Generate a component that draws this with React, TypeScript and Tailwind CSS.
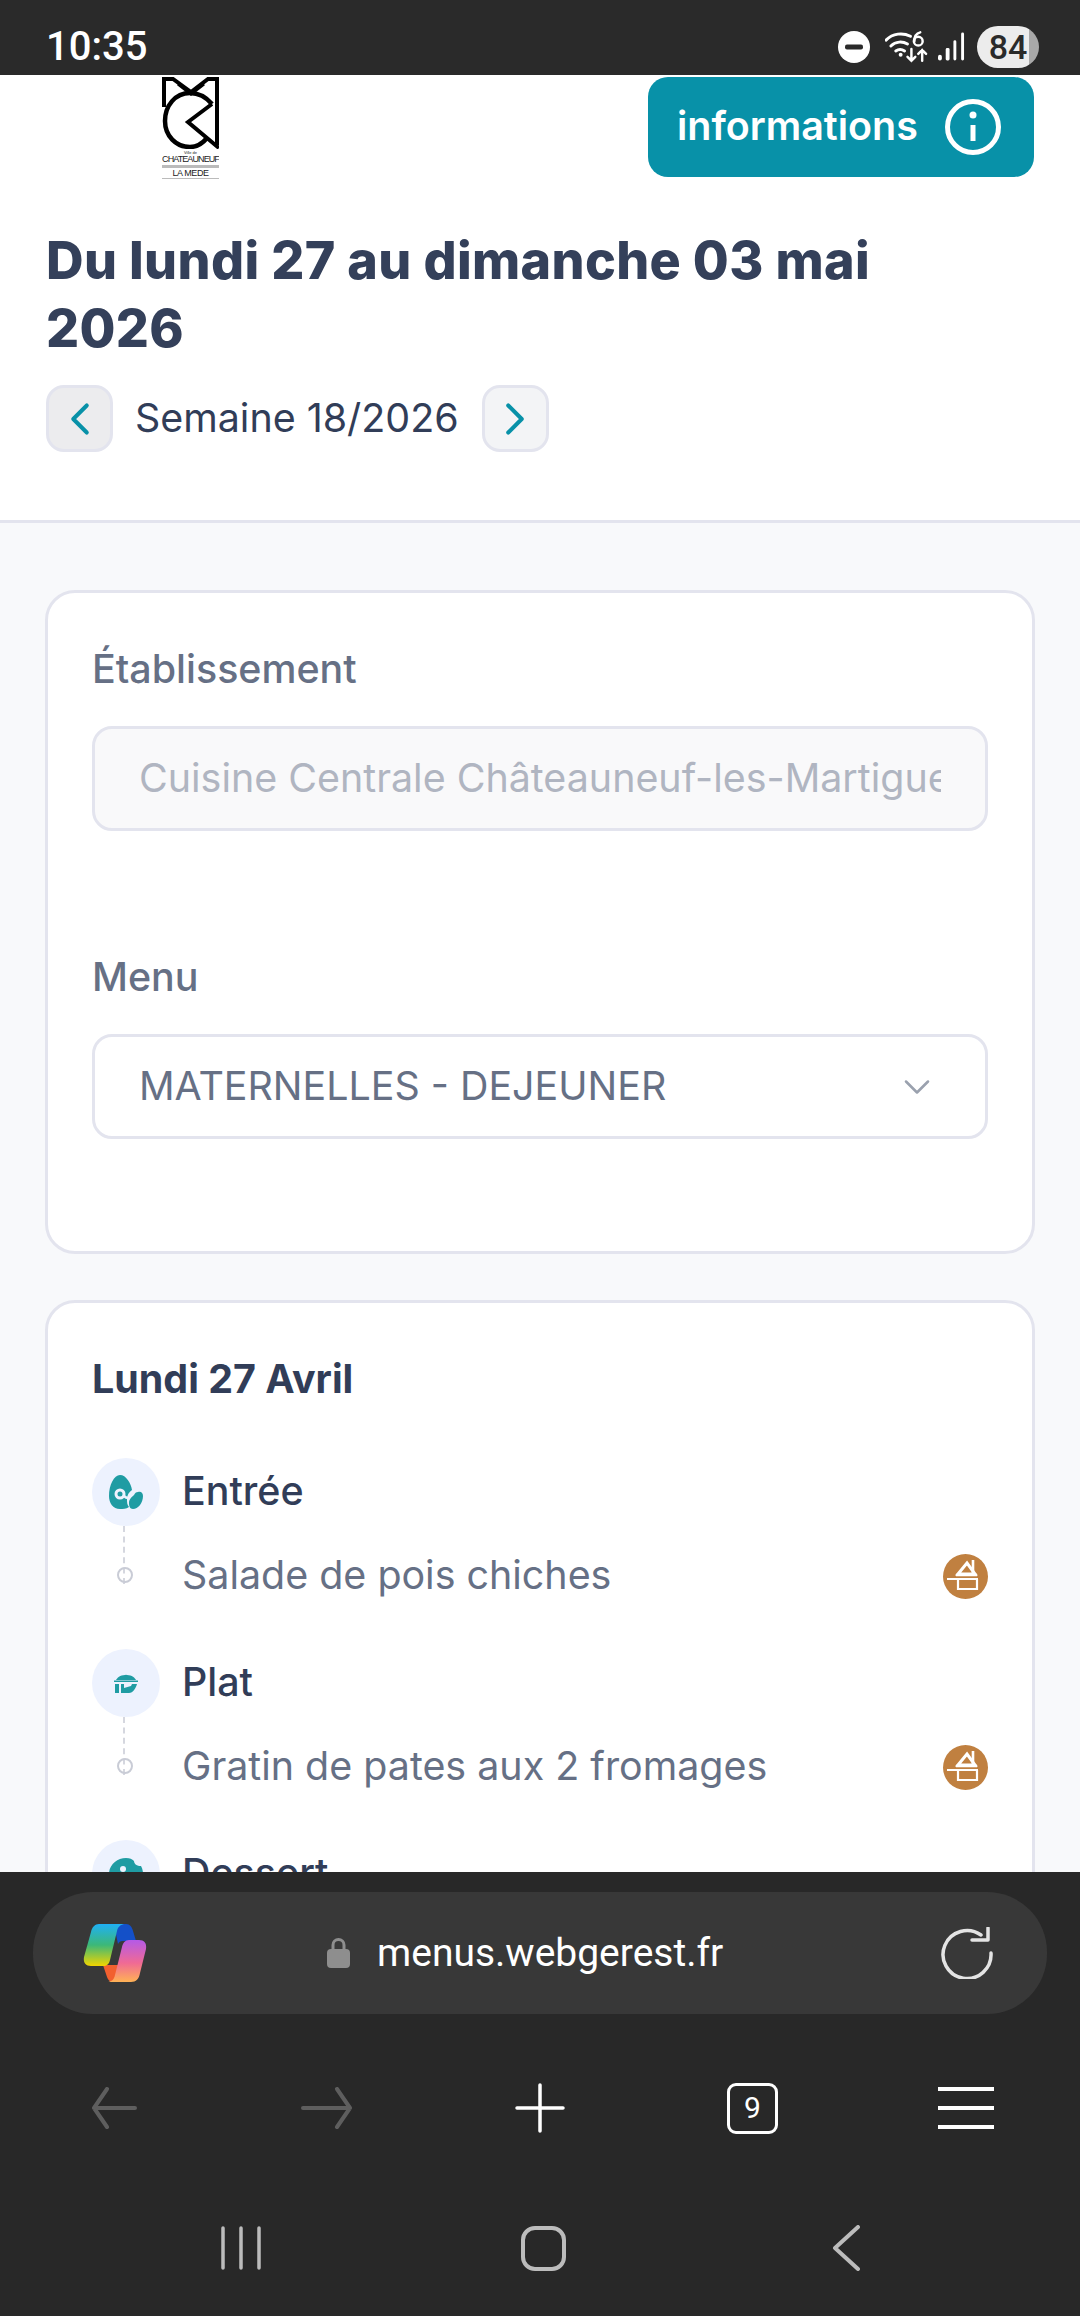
import React from 'react';
import { ChevronLeft, ChevronRight, ChevronDown } from 'lucide-react';

function Logo() {
  return (
    <div className="flex w-[57px] flex-col items-center overflow-hidden">
      <svg viewBox="0 0 57 72" className="h-[72px] w-[57px]" fill="none" stroke="#000">
        <path d="M2 30V2h9l18 13L46 2h9v66" strokeWidth="4" />
        <path d="M16 7l13 10L42 7" strokeWidth="3" />
        <path d="M50 27 26 45l31 26" strokeWidth="4" />
        <path d="M50 27C44 20 36 16 28 16 13 16 3 29 3 44c0 15 11 26 25 26 6 0 12-3 17-9" strokeWidth="4.500" />
      </svg>
      <div className="mt-[2px] flex w-[57px] flex-col items-center font-['Liberation_Sans',sans-serif] leading-none text-[#222]">
        <span className="text-[4px]">Ville de</span>
        <span className="text-[9px] tracking-[-0.9px]">CHATEAUNEUF</span>
        <span className="my-[1px] h-[3px] w-full bg-[#bbbbbb]" />
        <span className="w-full border-b border-[#bbbbbb] text-center text-[9px] tracking-[-0.4px]">LA MEDE</span>
      </div>
    </div>
  );
}

function StatusIcons() {
  return (
    <div className="flex items-center">
      <svg viewBox="0 0 32 32" className="h-[32px] w-[32px]">
        <circle cx="16" cy="16" r="16" fill="#fff" />
        <rect x="7" y="13.500" width="18" height="5" rx="2" fill="#2a2a2a" />
      </svg>
      <svg viewBox="0 0 46 34" className="ml-[15px] h-[34px] w-[45px]" fill="none" stroke="#fff" strokeLinecap="round">
        <path d="M1 10C8 3 18 2 26 6" strokeWidth="3" />
        <path d="M6 16c5-5 12-5 17-2" strokeWidth="3" />
        <path d="M11 21c3-2 6-2 9 0" strokeWidth="3" />
        <circle cx="16" cy="25" r="2" fill="#fff" stroke="none" />
        <path d="M27 19v12M23 27l4 4 4-4" strokeWidth="2.500" />
        <path d="M38 31V20M34 24l4-4 4 4" strokeWidth="2.500" />
        <circle cx="34" cy="11" r="4.500" strokeWidth="2.500" />
        <path d="M30 11c0-5 2-8 6-9" strokeWidth="2.500" />
      </svg>
      <svg viewBox="0 0 28 32" className="ml-[8px] h-[32px] w-[27px]" fill="#fff">
        <rect x="0" y="24" width="4" height="6" rx="2" />
        <rect x="8" y="17" width="4" height="13" rx="1.500" />
        <rect x="16" y="9" width="3" height="21" rx="1.500" />
        <rect x="24" y="1" width="3" height="29" rx="1.500" />
      </svg>
      <div className="ml-[12px] flex h-[42px] w-[62px] items-center justify-center rounded-full bg-[linear-gradient(90deg,#ececec_0,#ececec_84%,#a9a9a9_84%)] font-['Roboto',sans-serif] text-[34px] font-medium text-[#2a2a2a]">
        84
      </div>
    </div>
  );
}

function EntreeIcon() {
  return (
    <svg viewBox="0 0 34 34" className="h-[34px] w-[34px]">
      <path d="M11 0c6 0 11 8 12 15-3 2-5 5-5 9 0 3 0 6 2 8-3 2-6 2-9 2C4 34 0 28 0 21 0 10 5 0 11 0Z" fill="#1f9ca3" />
      <path d="M29 17c3-1 5 1 5 4 0 7-5 13-10 13-3 0-4-3-4-6 0-4 3-6 5-8 1-2 2-3 4-3Z" fill="#1f9ca3" />
      <circle cx="11" cy="19" r="4" fill="none" stroke="#edf2fe" strokeWidth="3" />
      <path d="M15 21c1 1 2 2 4 2" fill="none" stroke="#edf2fe" strokeWidth="2.500" />
    </svg>
  );
}

function PlatIcon() {
  return (
    <svg viewBox="0 0 24 20" className="h-[20px] w-[24px]">
      <path d="M11 2a2 2 0 0 1 2 0c5 0 8 3 9 5H2c1-2 4-5 9-5Z" fill="#1f9ca3" />
      <rect x="0" y="7.500" width="24" height="1.500" fill="#1f9ca3" />
      <rect x="1" y="11" width="4" height="9" fill="#1f9ca3" />
      <path d="M7 11h3v4l7-2 1-2h5c-1 4-4 9-8 9H7Z" fill="#1f9ca3" />
    </svg>
  );
}

function DessertIcon() {
  return (
    <svg viewBox="0 0 36 36" className="h-[36px] w-[36px]">
      <path d="M18 2c4 0 6 1 8 3 0 3 3 5 7 5 1 2 2 4 2 8 0 9-8 16-17 16S1 27 1 18C1 9 9 2 18 2Z" fill="#1f9ca3" />
      <circle cx="15" cy="13" r="3" fill="#edf2fe" />
    </svg>
  );
}

function FaitMaison() {
  return (
    <svg viewBox="0 0 45 45" className="h-[45px] w-[45px] shrink-0">
      <circle cx="22.500" cy="22.500" r="22.500" fill="#c08040" />
      <path d="M15 20 24 9l8 11Z" fill="none" stroke="#fff" strokeWidth="3" />
      <path d="M30 6v13M13 21h21" stroke="#fff" strokeWidth="2.600" />
      <path d="M4 25h31M15 25v10h19V25" fill="none" stroke="#fff" strokeWidth="2.200" />
    </svg>
  );
}

interface CourseProps {
  label: string;
  dish?: string;
  icon: React.ReactNode;
}

function Course({ label, dish, icon }: CourseProps) {
  return (
    <div className="mb-[23px]">
      <div className="flex h-[68px] items-center gap-[22px]">
        <div className="flex h-[68px] w-[68px] shrink-0 items-center justify-center rounded-full bg-[#edf2fe]">{icon}</div>
        <span className="text-[39.4px] font-medium text-[#313d58]">{label}</span>
      </div>
      {dish && (
        <div className="relative flex h-[100px] items-center pl-[90px]">
          <div className="absolute left-[31px] top-0 h-[58px] border-l-2 border-dashed border-[#d5d7df]" />
          <div className="absolute left-[25px] top-[41px] h-[16px] w-[16px] rounded-full border-2 border-[#c9ccd6]" />
          <span className="flex-1 text-[39.4px] text-[#667085]">{dish}</span>
          <FaitMaison />
        </div>
      )}
    </div>
  );
}

export default function App() {
  return (
    <div className="flex h-[2316px] w-[1080px] flex-col overflow-hidden bg-[#f8f9fb] font-['Inter',sans-serif]">
      {/* Android status bar */}
      <div className="flex h-[75px] shrink-0 items-center justify-between bg-[#2a2a2a] pl-[46px] pr-[41px] pt-[19px]">
        <span className="font-['Roboto',sans-serif] text-[40px] font-medium leading-none text-white">10:35</span>
        <StatusIcons />
      </div>

      <div className="min-h-0 flex-1 overflow-hidden">
        {/* Header */}
        <div className="border-b-[3px] border-[#e3e4ee] bg-white px-[46px] pb-[68px]">
          <div className="flex items-start justify-between pl-[116px]">
            <div className="pt-[2px]">
              <Logo />
            </div>
            <button className="mt-[2px] flex h-[100px] w-[386px] items-center gap-[27px] rounded-[20px] bg-[#0891a8] pl-[29px] text-[39.4px] font-semibold text-white">
              informations
              <svg viewBox="0 0 56 56" className="h-[56px] w-[56px]" fill="none" stroke="#fff">
                <circle cx="28" cy="28" r="25.500" strokeWidth="5" />
                <path d="M28 26v16" strokeWidth="5" />
                <circle cx="28" cy="16" r="3.500" fill="#fff" stroke="none" />
              </svg>
            </button>
          </div>
          <h1 className="mt-[48px] max-w-[900px] text-[52px] font-extrabold leading-[68px] tracking-[0.35px] text-[#34405a]">
            Du lundi 27 au dimanche 03 mai 2026
          </h1>
          <div className="mt-[22px] flex items-center">
            <button className="flex h-[67px] w-[67px] items-center justify-center rounded-[18px] border-[3px] border-[#e3e4ee] bg-[#ececee] text-[#0891a8]">
              <ChevronLeft size={54} strokeWidth={1.8} />
            </button>
            <span className="ml-[22px] mr-[23px] text-[39.4px] text-[#313d58]">Semaine 18/2026</span>
            <button className="flex h-[67px] w-[67px] items-center justify-center rounded-[18px] border-[3px] border-[#e3e4ee] bg-[#f3f4f6] text-[#0891a8]">
              <ChevronRight size={54} strokeWidth={1.8} />
            </button>
          </div>
        </div>

        {/* Cards */}
        <div className="flex flex-col gap-[46px] px-[45px] pt-[67px]">
          <div className="rounded-[30px] border-[3px] border-[#e3e4ee] bg-white px-[44px] pb-[112px] pt-[52px]">
            <div className="text-[39.4px] font-medium leading-[48px] text-[#667085]">Établissement</div>
            <div className="mt-[33px] flex h-[105px] items-center rounded-[20px] border-[3px] border-[#e3e4ee] bg-[#f9f9fa] px-[44px]">
              <span className="overflow-hidden whitespace-nowrap text-[39.4px] text-[#b0b5c1]">Cuisine Centrale Châteauneuf-les-Martigues</span>
            </div>
            <div className="mt-[122px] text-[39.4px] font-medium leading-[48px] text-[#667085]">Menu</div>
            <div className="mt-[33px] flex h-[105px] items-center justify-between rounded-[20px] border-[3px] border-[#e3e4ee] bg-white pl-[44px] pr-[46px]">
              <span className="text-[39.4px] text-[#667085]">MATERNELLES - DEJEUNER</span>
              <ChevronDown size={44} strokeWidth={1.4} className="text-[#9aa1ae]" />
            </div>
          </div>

          <div className="rounded-[30px] border-[3px] border-[#e3e4ee] bg-white px-[44px] pb-[40px] pt-[52px]">
            <div className="mb-[55px] text-[39.4px] font-bold leading-[48px] text-[#313d58]">Lundi 27 Avril</div>
            <Course label="Entrée" dish="Salade de pois chiches" icon={<EntreeIcon />} />
            <Course label="Plat" dish="Gratin de pates aux 2 fromages" icon={<PlatIcon />} />
            <Course label="Dessert" icon={<DessertIcon />} />
          </div>
        </div>
      </div>

      {/* Browser chrome */}
      <div className="h-[444px] shrink-0 bg-[#282828]">
        <div className="mx-[33px] mt-[20px] flex h-[122px] items-center rounded-[60px] bg-[#383838] pl-[50px] pr-[54px]">
          <svg viewBox="0 0 64 60" className="h-[60px] w-[64px]">
            <defs>
              <linearGradient id="copA" x1="0" y1="0" x2="0" y2="1">
                <stop offset="0" stopColor="#1fb0f5" />
                <stop offset="0.5" stopColor="#3cb878" />
                <stop offset="1" stopColor="#f2d500" />
              </linearGradient>
              <linearGradient id="copB" x1="0" y1="0" x2="0" y2="1">
                <stop offset="0" stopColor="#b45ae8" />
                <stop offset="0.55" stopColor="#f06a94" />
                <stop offset="1" stopColor="#ffb255" />
              </linearGradient>
            </defs>
            <path d="M34 1h9c4 0 6 3 7 7l3 10H40c-3 0-4 1-5 3l-4-19Z" fill="#1450c8" />
            <path d="M20 42h21l-5 17h-5c-4 0-6-2-7-5Z" fill="#f2602f" />
            <path d="M16 1h25c-4 1-6 3-7 7l-7 29c-1 4-3 6-7 6H8c-5 0-8-3-7-9L8 9c1-5 4-8 8-8Z" fill="url(#copA)" />
            <path d="M46 17h10c5 0 8 3 7 9l-6 24c-1 6-4 9-9 9H24c4 0 7-2 8-7l7-28c1-4 3-7 7-7Z" fill="url(#copB)" />
          </svg>
          <div className="ml-[180px] flex flex-1 items-center">
            <svg viewBox="0 0 23 30" className="h-[30px] w-[23px]">
              <path d="M6 12V7a5.500 5.500 0 0 1 11 0v5" fill="none" stroke="#8e8e8e" strokeWidth="3" />
              <rect x="0" y="11" width="23" height="19" rx="4" fill="#8e8e8e" />
            </svg>
            <span className="ml-[27px] font-['Roboto',sans-serif] text-[39px] text-white">menus.webgerest.fr</span>
          </div>
          <svg viewBox="0 0 52 52" className="h-[52px] w-[52px]" fill="none" stroke="#e4e4e4" strokeWidth="3.500" strokeLinecap="round" strokeLinejoin="round">
            <path d="M40 8A24 24 0 1 0 50 26" />
            <path d="M47 1v12H31" />
          </svg>
        </div>

        <div className="mt-[59px] grid h-[70px] grid-cols-[repeat(5,213px)] pl-[7px]">
          <div className="flex items-center justify-center">
            <svg viewBox="0 0 46 42" className="h-[42px] w-[46px]" fill="none" stroke="#5e5e5e" strokeWidth="4" strokeLinecap="round" strokeLinejoin="round">
              <path d="M16 2 3 21l13 19M3 21h41" />
            </svg>
          </div>
          <div className="flex items-center justify-center">
            <svg viewBox="0 0 52 42" className="h-[42px] w-[52px]" fill="none" stroke="#5e5e5e" strokeWidth="4" strokeLinecap="round" strokeLinejoin="round">
              <path d="M36 2l13 19-13 19M2 21h47" />
            </svg>
          </div>
          <div className="flex items-center justify-center">
            <svg viewBox="0 0 50 50" className="h-[50px] w-[50px]" fill="none" stroke="#fff" strokeWidth="3.500" strokeLinecap="round">
              <path d="M25 2v46M2 25h46" />
            </svg>
          </div>
          <div className="flex items-center justify-center">
            <div className="flex h-[51px] w-[51px] items-center justify-center rounded-[9px] border-[3px] border-white font-['Roboto',sans-serif] text-[30px] leading-none text-white">9</div>
          </div>
          <div className="flex items-center justify-center">
            <svg viewBox="0 0 56 44" className="h-[44px] w-[56px]" fill="none" stroke="#fff" strokeWidth="4">
              <path d="M0 3h56M0 22h56M0 41h56" />
            </svg>
          </div>
        </div>

        <div className="mt-[82px] grid h-[46px] grid-cols-[repeat(3,302.5px)] pl-[90px]">
          <div className="flex items-center justify-center">
            <svg viewBox="0 0 40 44" className="h-[44px] w-[40px]" fill="none" stroke="#bcbcbc" strokeWidth="3.500" strokeLinecap="round">
              <path d="M2 2v40M20 2v40M38 2v40" />
            </svg>
          </div>
          <div className="flex items-center justify-center">
            <div className="h-[45px] w-[45px] rounded-[14px] border-[4px] border-[#bcbcbc]" />
          </div>
          <div className="flex items-center justify-center">
            <svg viewBox="0 0 28 46" className="h-[46px] w-[28px]" fill="none" stroke="#bcbcbc" strokeWidth="4" strokeLinecap="round" strokeLinejoin="round">
              <path d="M26 2 3 23l23 21" />
            </svg>
          </div>
        </div>
      </div>
    </div>
  );
}
